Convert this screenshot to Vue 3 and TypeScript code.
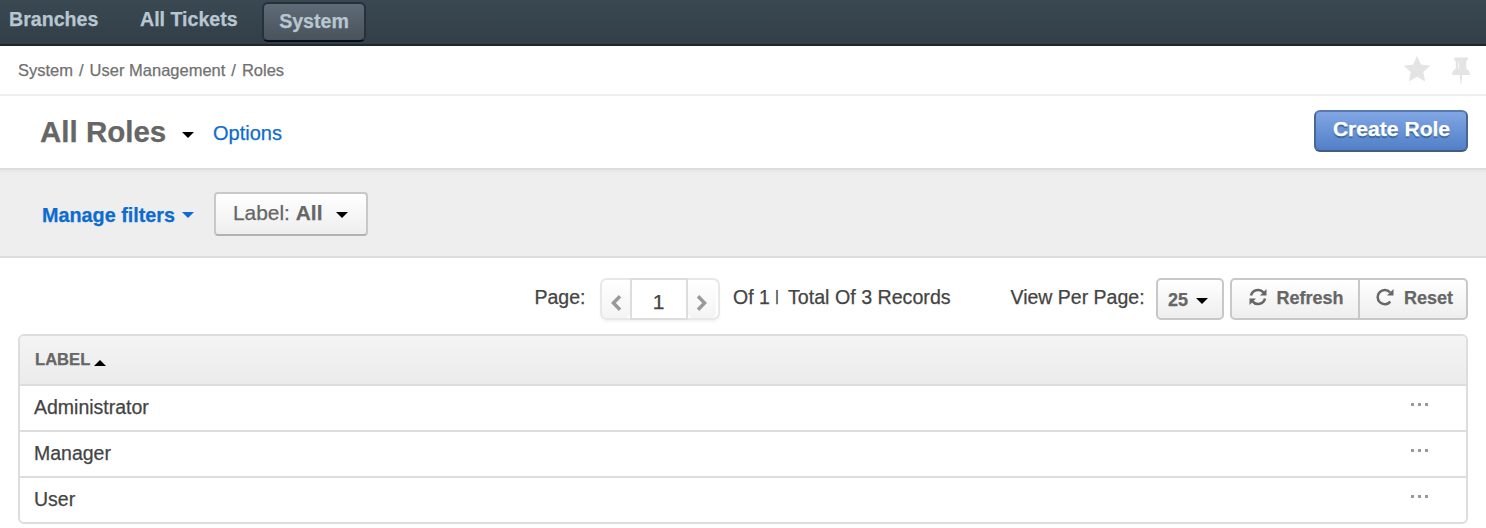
<script setup lang="ts">
interface Role {
  id: number
  label: string
}

const crumbs: string[] = ['System', 'User Management', 'Roles']
const roles: Role[] = [
  { id: 1, label: 'Administrator' },
  { id: 2, label: 'Manager' },
  { id: 3, label: 'User' },
]
</script>

<template>
  <div class="page">
    <nav class="nav">
      <a class="nav-item branches">Branches</a>
      <a class="nav-item tickets">All Tickets</a>
      <a class="nav-item active">System</a>
    </nav>

    <div class="crumb-bar">
      <div class="crumbs">
        <template v-for="(crumb, i) in crumbs" :key="crumb">
          <span v-if="i > 0" class="slash">/</span>
          <a>{{ crumb }}</a>
        </template>
      </div>
      <svg class="star" width="28" height="26" viewBox="0 0 28 26">
        <path d="M14 0 L17.9 8.6 L27.3 9.7 L20.3 16 L22.2 25.4 L14 20.8 L5.8 25.4 L7.7 16 L0.7 9.7 L10.1 8.6 Z" fill="#e4e4e4" />
      </svg>
      <svg class="pin" width="20" height="28" viewBox="0 0 20 28">
        <path d="M4 0.500 H16 Q17 0.500 17 2 T16 3.500 H15.300 V11.800 Q19 13.500 19 18 H11.200 L10.400 27 H9.600 L8.800 18 H1 Q1 13.500 4.700 11.800 V3.500 H4 Q3 3.500 3 2 T4 0.500 Z" fill="#e4e4e4" />
        <path d="M7.500 4.500 V12" stroke="#f6f6f6" stroke-width="1.200" />
      </svg>
    </div>

    <header class="title-bar">
      <h1>All Roles</h1>
      <svg class="caret title-caret" width="12" height="6" viewBox="0 0 12 6"><path d="M0 0H12L6 6Z" /></svg>
      <a class="options">Options</a>
      <button class="create">Create Role</button>
    </header>

    <section class="filters">
      <a class="manage">Manage filters</a>
      <svg class="caret manage-caret" width="12" height="6" viewBox="0 0 12 6"><path d="M0 0H12L6 6Z" /></svg>
      <button class="label-filter">
        <span>Label: <b>All</b></span>
        <svg class="caret" width="12" height="6" viewBox="0 0 12 6"><path d="M0 0H12L6 6Z" /></svg>
      </button>
    </section>

    <div class="toolbar">
      <span class="text page-label">Page:</span>
      <div class="pager">
        <button class="step">
          <svg width="12" height="18" viewBox="0 0 12 18"><path d="M10 2.200 L3.400 9 L10 15.800" /></svg>
        </button>
        <span class="page-number">1</span>
        <button class="step">
          <svg width="12" height="18" viewBox="0 0 12 18"><path d="M2 2.200 L8.600 9 L2 15.800" /></svg>
        </button>
      </div>
      <span class="text of">Of 1</span>
      <span class="text bar">|</span>
      <span class="text total">Total Of 3 Records</span>
      <span class="text view">View Per Page:</span>
      <button class="size">
        25
        <svg class="caret" width="12" height="6" viewBox="0 0 12 6"><path d="M0 0H12L6 6Z" /></svg>
      </button>
      <div class="actions">
        <button class="refresh">
          <svg width="18" height="18" viewBox="0 0 18 18">
            <path d="M2 7.600 A7.200 7 0 0 1 14.600 4.600 M16 10.400 A7.200 7 0 0 1 3.400 13.400" fill="none" stroke="#666" stroke-width="2.500" />
            <path d="M17.500 1 V7.500 H11 Z M0.500 17 V10.500 H7 Z" fill="#666" />
          </svg>
          Refresh
        </button>
        <button class="reset">
          <svg width="18" height="18" viewBox="0 0 18 18">
            <path d="M14 4.300 A7.100 7.100 0 1 0 14.300 13.600" fill="none" stroke="#666" stroke-width="2.500" />
            <path d="M17.500 1 V7.500 H11 Z" fill="#666" />
          </svg>
          Reset
        </button>
      </div>
    </div>

    <div class="table">
      <div class="head">
        LABEL
        <svg class="caret" width="12" height="6" viewBox="0 0 12 6"><path d="M0 6H12L6 0Z" /></svg>
      </div>
      <div v-for="role in roles" :key="role.id" class="row">
        <span>{{ role.label }}</span>
        <span class="more"><i></i><i></i><i></i></span>
      </div>
    </div>
  </div>
</template>

<style>
body {
  background: #fff;
}
</style>

<style scoped>
.page {
  width: 1486px;
  height: 528px;
  overflow: hidden;
  background: #fff;
  color: #444;
  font-family: "Liberation Sans", Arial, sans-serif;
  font-size: 19.5px;
  -webkit-text-stroke: 0.25px;
}
.page * {
  box-sizing: border-box;
}
svg {
  display: block;
  flex: none;
}
.page button {
  font-family: inherit;
  margin: 0;
  padding: 0;
  -webkit-text-stroke: 0.25px;
}
.caret {
  fill: #000;
}
.nav {
  height: 46px;
  display: flex;
  align-items: flex-start;
  background: linear-gradient(#394851, #333f48);
  border-bottom: 2px solid #1d2731;
}
.nav-item {
  color: #b8c6d1;
  font-weight: bold;
  font-size: 19.6px;
  line-height: 24px;
  white-space: nowrap;
}
.branches {
  margin: 7px 0 0 9px;
  width: 131px;
}
.tickets {
  width: 122px;
  margin-top: 7px;
}
.active {
  margin-top: 2px;
  width: 104px;
  height: 40px;
  padding-top: 5px;
  text-align: center;
  border: 2px solid #27313b;
  border-bottom-color: #080e14;
  border-radius: 6px;
  background: linear-gradient(#5f6b77, #48525b);
}
.crumb-bar {
  height: 50px;
  display: flex;
  border-bottom: 2px solid #f0f0f0;
}
.crumbs {
  width: 1385px;
  padding: 14px 0 0 18px;
  font-size: 16.5px;
  line-height: 20px;
  color: #717171;
}
.slash {
  margin: 0 6px;
}
.star {
  margin: 10px 0 0 17.5px;
}
.pin {
  margin: 11px 0 0 20.5px;
}
.title-bar {
  height: 72px;
  display: flex;
}
h1 {
  margin: 18px 0 0 40px;
  width: 142px;
  font-size: 29.5px;
  line-height: 36px;
  color: #666;
}
.title-caret {
  margin-top: 36px;
}
.options {
  margin: 25px 0 0 19px;
  width: 1101px;
  font-size: 20px;
  line-height: 24px;
  color: #0d6ccd;
}
.create {
  width: 154px;
  height: 42px;
  margin-top: 14px !important;
  padding: 0 0 4px 1px !important;
  border: 2px solid #4a6793;
  border-top-color: #587aac;
  border-bottom-color: #455b80;
  border-radius: 6px;
  background: linear-gradient(#81a6e4, #517fc7);
  color: #fff;
  font-size: 21.1px;
  font-weight: bold;
  text-shadow: 0 2px 1px #366598;
}
.filters {
  height: 90px;
  display: flex;
  background: #eee;
  border-top: 2px solid #ddd;
  border-bottom: 2px solid #ddd;
  box-shadow: inset 0 2px #e9e9e9;
}
.manage {
  margin: 33px 0 0 42px;
  width: 140px;
  color: #0d6ccd;
  font-weight: bold;
  font-size: 19.8px;
  line-height: 24px;
}
.manage-caret {
  margin-top: 42px;
  fill: #0d6ccd;
}
.label-filter {
  display: flex;
  width: 154px;
  height: 44px;
  margin: 22px 0 0 20px !important;
  padding-left: 17px !important;
  border: 2px solid #c8c8c8;
  border-bottom-color: #b2b2b2;
  border-radius: 4px;
  background: linear-gradient(#fff, #eee);
  color: #666;
  font-size: 20.9px;
  line-height: 24px;
}
.label-filter span {
  width: 103px;
  margin-top: 7px;
  text-align: left;
  white-space: nowrap;
}
.label-filter .caret {
  margin-top: 18px;
}
.toolbar {
  display: flex;
  height: 42px;
  margin: 20px 18px 14px 534px;
}
.text {
  line-height: 24px;
  margin-top: 7px;
  white-space: nowrap;
}
.page-label {
  width: 66px;
  padding-left: 0.5px;
}
.pager {
  display: flex;
  width: 120px;
  border: 2px solid #e8e8e8;
  border-radius: 7px;
  box-shadow: 0 2px 2px #f4f4f4;
}
.step {
  width: 28px;
  flex: none;
  border: 0;
  border-radius: 5px;
  background: linear-gradient(#fff, #f4f4f4);
  display: flex;
  justify-content: center;
}
.step svg {
  margin-top: 14px;
  fill: none;
  stroke: #999;
  stroke-width: 3.4;
}
.page-number {
  width: 58px;
  flex: none;
  height: 42px;
  margin-top: -2px;
  padding: 10px 1px 0 0;
  border: 2px solid #ddd;
  text-align: center;
  font-size: 21px;
  line-height: 24px;
  background: #fff;
}
.of {
  margin-left: 13px;
  width: 42px;
}
.bar {
  width: 13px;
  font-size: 15px;
  margin-top: 6px;
}
.total {
  width: 222px;
  font-size: 19.65px;
}
.view {
  width: 146px;
  padding-left: 0.5px;
}
.size,
.actions {
  border: 2px solid #c8c8c8;
  border-radius: 5px;
  background: linear-gradient(#fff, #eee);
}
.size {
  display: flex;
  width: 68px;
  padding: 8px 0 0 10px !important;
  font-size: 18px;
  line-height: 24px;
  font-weight: bold;
  color: #666;
}
.size .caret {
  margin: 10px 0 0 8px;
}
.actions {
  display: flex;
  width: 238px;
  margin-left: 6px;
}
.page .actions button {
  display: flex;
  align-items: flex-start;
  border: 0;
  background: none;
  color: #666;
  font-size: 18px;
  font-weight: bold;
  line-height: 24px;
  padding-top: 6px;
}
.actions svg {
  margin-top: 2px;
}
.page .actions .refresh {
  width: 126px;
  flex: none;
  padding-left: 17px;
  gap: 9.5px;
}
.page .actions .reset {
  width: 108px;
  flex: none;
  padding-left: 16px;
  gap: 10px;
  border-left: 2px solid #c8c8c8;
}
.table {
  width: 1450px;
  height: 190px;
  margin-left: 18px;
  border: 2px solid #ddd;
  border-radius: 6px;
  overflow: hidden;
}
.head {
  display: flex;
  height: 48px;
  padding: 12px 0 0 15px;
  background: linear-gradient(#f4f4f4, #ebebeb);
  color: #666;
  font-size: 16.6px;
  line-height: 24px;
  font-weight: bold;
}
.head .caret {
  margin: 12px 0 0 3.5px;
}
.row {
  display: flex;
  height: 46px;
  padding: 9px 0 0 14px;
  border-top: 2px solid #ddd;
  line-height: 24px;
}
.row span:first-child {
  width: 1377px;
}
.more {
  display: flex;
  gap: 4px;
  padding-top: 8px;
}
.more i {
  width: 3px;
  height: 3px;
  background: #999;
}
</style>
